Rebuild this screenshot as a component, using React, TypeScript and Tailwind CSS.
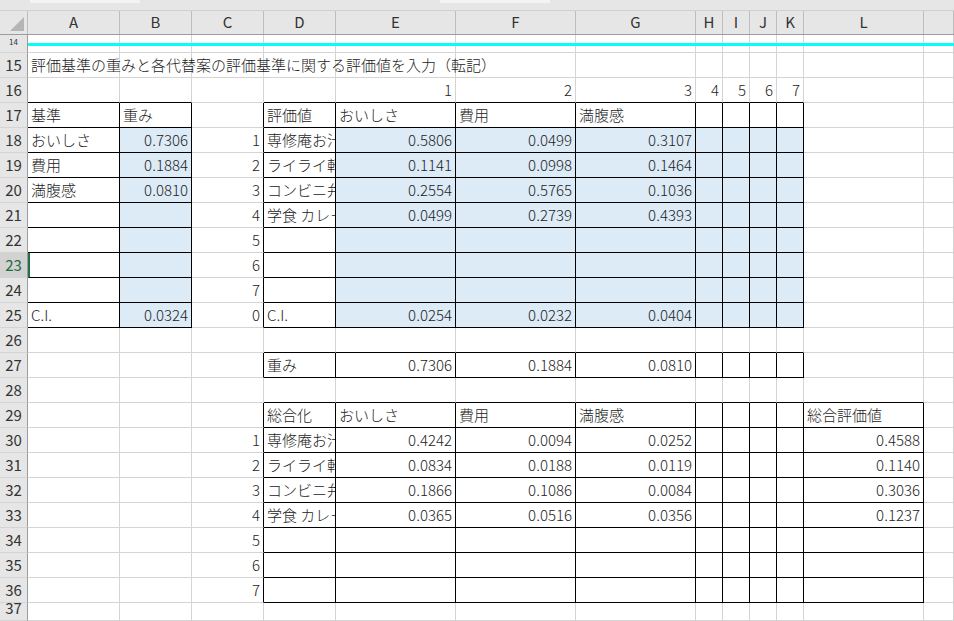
import React from "react";

const colW = [28, 92, 72, 72, 72, 120, 120, 120, 27, 27, 27, 27, 120, 30];
const colNames = ["A", "B", "C", "D", "E", "F", "G", "H", "I", "J", "K", "L", ""];
type Cell = { t?: string; r?: boolean; fill?: boolean; box?: boolean };
const rows: Record<number, Cell[]> = {};
for (let r = 14; r <= 37; r++) rows[r] = Array.from({ length: 13 }, () => ({}));
const set = (r: number, c: number, t: string, right = false) => { rows[r][c].t = t; rows[r][c].r = right; };
const box = (r1: number, r2: number, c1: number, c2: number) => {
  for (let r = r1; r <= r2; r++) for (let c = c1; c <= c2; c++) rows[r][c].box = true;
};
const fill = (r1: number, r2: number, c1: number, c2: number) => {
  for (let r = r1; r <= r2; r++) for (let c = c1; c <= c2; c++) rows[r][c].fill = true;
};
box(17, 25, 0, 1); box(17, 25, 3, 10); box(27, 27, 3, 10); box(29, 36, 3, 11);
fill(18, 25, 1, 1); fill(18, 25, 4, 10);
set(15, 0, "評価基準の重みと各代替案の評価基準に関する評価値を入力（転記）");
["1", "2", "3", "4", "5", "6", "7"].forEach((v, i) => set(16, 4 + i, v, true));
set(17, 0, "基準"); set(17, 1, "重み");
set(18, 0, "おいしさ"); set(18, 1, "0.7306", true);
set(19, 0, "費用"); set(19, 1, "0.1884", true);
set(20, 0, "満腹感"); set(20, 1, "0.0810", true);
set(25, 0, "C.I."); set(25, 1, "0.0324", true);
["1", "2", "3", "4", "5", "6", "7", "0"].forEach((v, i) => set(18 + i, 2, v, true));
["1", "2", "3", "4", "5", "6", "7"].forEach((v, i) => set(30 + i, 2, v, true));
const names = ["専修庵お汁粉", "ライライ軒", "コンビニ弁当", "学食 カレー"];
set(17, 3, "評価値"); set(17, 4, "おいしさ"); set(17, 5, "費用"); set(17, 6, "満腹感");
const ev = [["0.5806", "0.0499", "0.3107"], ["0.1141", "0.0998", "0.1464"], ["0.2554", "0.5765", "0.1036"], ["0.0499", "0.2739", "0.4393"]];
ev.forEach((row, i) => { set(18 + i, 3, names[i]); row.forEach((v, j) => set(18 + i, 4 + j, v, true)); });
set(25, 3, "C.I."); set(25, 4, "0.0254", true); set(25, 5, "0.0232", true); set(25, 6, "0.0404", true);
set(27, 3, "重み"); set(27, 4, "0.7306", true); set(27, 5, "0.1884", true); set(27, 6, "0.0810", true);
set(29, 3, "総合化"); set(29, 4, "おいしさ"); set(29, 5, "費用"); set(29, 6, "満腹感"); set(29, 11, "総合評価値");
const tot = [["0.4242", "0.0094", "0.0252", "0.4588"], ["0.0834", "0.0188", "0.0119", "0.1140"], ["0.1866", "0.1086", "0.0084", "0.3036"], ["0.0365", "0.0516", "0.0356", "0.1237"]];
tot.forEach((row, i) => { set(30 + i, 3, names[i]); row.slice(0, 3).forEach((v, j) => set(30 + i, 4 + j, v, true)); set(30 + i, 11, row[3], true); });

const isBox = (r: number, c: number) => !!rows[r]?.[c]?.box;

export default function App() {
  const font = { fontFamily: '"Noto Sans CJK JP", "Noto Sans", sans-serif' };
  const rowNums = Array.from({ length: 24 }, (_, i) => 14 + i);
  return (
    <div className="w-[954px] h-[621px] overflow-hidden bg-white text-[15px] font-light text-[#222]" style={font}>
      <div className="h-[11px] bg-[#e6e6e6] flex border-b border-[#d0d0d0]">
        <div className="w-[110px] bg-[#f3f3f3] h-[3px] ml-[30px]" />
        <div className="w-[110px] bg-[#f3f3f3] h-[3px] ml-[300px]" />
      </div>
      <div className="flex h-[24px] bg-[#e6e6e6] border-b border-[#9c9c9c] font-normal">
        <div className="w-[28px] shrink-0 border-r border-[#bdbdbd] relative">
          <div className="absolute right-[3px] bottom-[3px] w-0 h-0 border-l-[14px] border-l-transparent border-b-[14px] border-b-[#b5b5b5]" />
        </div>
        {colNames.map((n, i) => (
          <div key={i} style={{ width: colW[i + 1] }} className="shrink-0 flex items-center justify-center border-r border-[#bdbdbd] text-[15px] text-[#333]">
            {n}
          </div>
        ))}
      </div>
      {rowNums.map((r) => {
        const h = r === 14 ? 18 : r === 37 ? 18 : 25;
        return (
          <div key={r} className="flex relative" style={{ height: h }}>
            <div className={`w-[28px] shrink-0 border-r border-[#9c9c9c] border-b border-b-[#d4d4d4] text-[15px] font-normal flex items-end justify-center overflow-hidden ${r === 23 ? "bg-[#d2d2d2] text-[#1e6b3e]" : "bg-[#e6e6e6] text-[#333]"}`}>
              {r === 14 ? <span className="text-[8px] leading-none pb-[6px]">14</span> : <span className="pb-[1px]">{r}</span>}
            </div>
            {rows[r].map((cell, c) => {
              const bR = cell.box || isBox(r, c + 1);
              const bB = cell.box || isBox(r + 1, c);
              return (
                <div
                  key={c}
                  style={{ width: colW[c + 1] }}
                  className={`shrink-0 border-r border-b whitespace-nowrap flex items-center px-[3px] ${bR ? "border-r-black" : "border-r-[#d4d4d4]"} ${bB ? "border-b-black" : "border-b-[#d4d4d4]"} ${cell.fill ? "bg-[#ddebf7]" : ""} ${cell.r ? "justify-end" : ""} ${r === 15 && c === 0 ? "overflow-visible" : "overflow-hidden"} ${r === 23 && c === 0 ? "border-l-2 border-l-[#217346]" : ""}`}
                >
                  {cell.t && <span className={r === 15 ? "relative z-10" : ""}>{cell.t}</span>}
                </div>
              );
            })}
            {r === 14 && <div className="absolute left-[28px] right-0 top-[8px] h-[3px] bg-[#00ffff]" />}
          </div>
        );
      })}
    </div>
  );
}
